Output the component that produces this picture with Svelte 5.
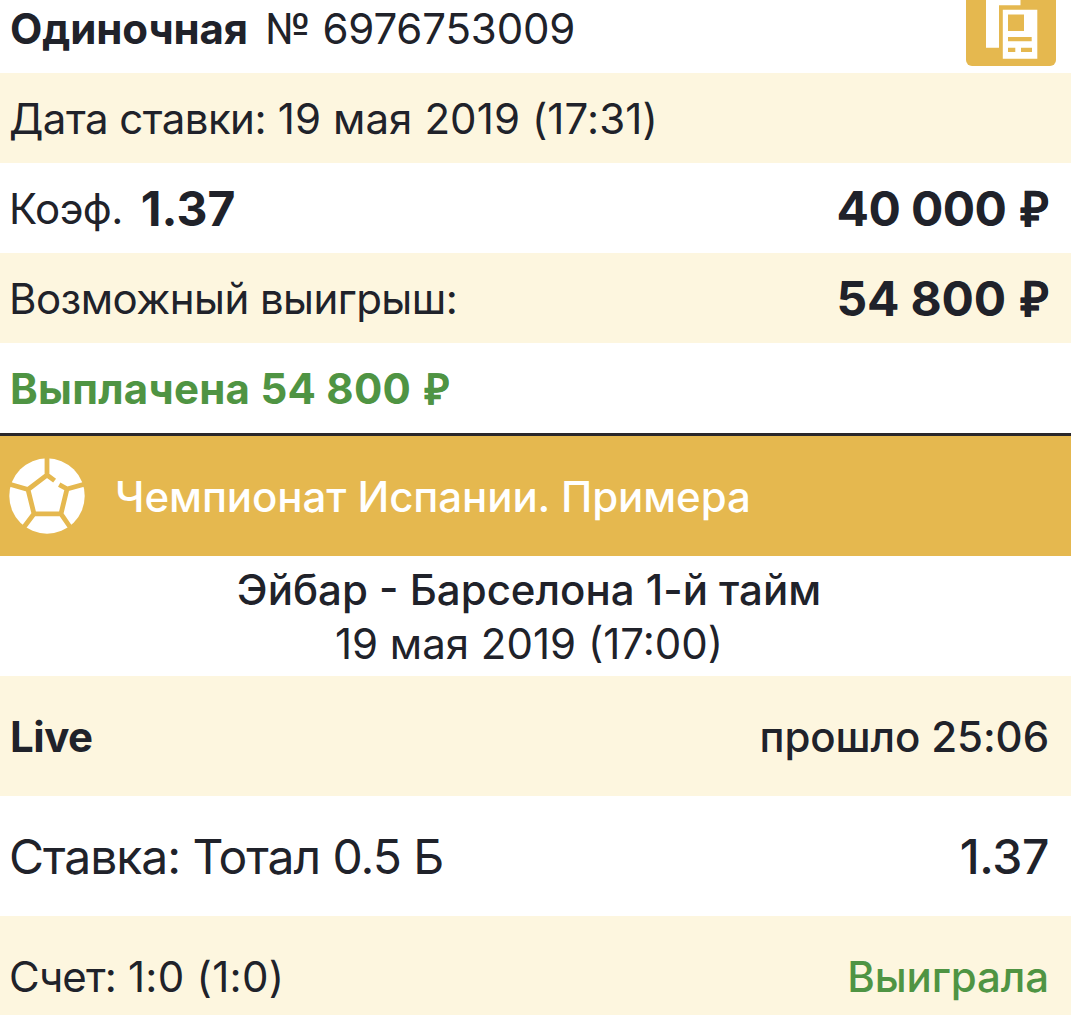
<script>
  const bet = {
    type: 'Одиночная',
    number: '№ 6976753009',
    placed: '19 мая 2019 (17:31)',
    odds: '1.37',
    stake: '40 000',
    win: '54 800',
  };
</script>

<main class="slip">
  <header class="row head">
    <div class="pair"><strong class="type">{bet.type}</strong><span class="number">{bet.number}</span></div>
    <button class="copy" aria-label="Копировать">
      <svg width="90" height="66" viewBox="0 0 90 66">
        <path fill="#fff" d="M20 0H54.5V5.3H33V47.7H20Z" />
        <path fill="#fff" fill-rule="evenodd" d="M36.8 9.7H71.3V58.7H36.8ZM42 14.4V31H58V14.4ZM42 37V41.3H65.7V37ZM42 47.7V52H49.3V47.7ZM55 47.7V52H66V47.7Z" />
      </svg>
    </button>
  </header>

  <div class="row tint">
    <span><span class="tight">Дата ставки:</span> <span class="placed">{bet.placed}</span></span>
  </div>
  <div class="row">
    <div class="pair"><span class="tight">Коэф.</span><strong class="big odds">{bet.odds}</strong></div>
    <strong class="big">{bet.stake} <span class="rub">₽</span></strong>
  </div>
  <div class="row tint">
    <span class="tight">Возможный выигрыш:</span>
    <strong class="big win">{bet.win} <span class="rub">₽</span></strong>
  </div>
  <div class="row"><strong class="paid">Выплачена {bet.win} <span class="rub">₽</span></strong></div>

  <section class="league">
    <svg class="ball" width="76" height="76" viewBox="0 0 76 76">
      <circle cx="38" cy="38" r="37.7" fill="#fff" />
      <path
        fill="none"
        stroke="#e5b84f"
        stroke-width="4.8"
        d="M38 0V17M45.6 22.7L38 17L19 31.5L25 55.8H52L58 31L50.2 26.7M19 31.5L0 26M25 55.8L15 69M52 55.8L61 69M58 31L76 26"
      />
    </svg>
    <span class="league-name">Чемпионат Испании. Примера</span>
  </section>

  <section class="match">
    <div class="teams">Эйбар - Барселона 1-й тайм</div>
    <div class="kickoff">19 мая 2019 (17:00)</div>
  </section>

  <div class="row tall tint"><strong class="live">Live</strong><span class="elapsed">прошло 25:06</span></div>
  <div class="row tall"><span class="pick">Ставка: Тотал 0.5 Б</span><span class="pick-odds">{bet.odds}</span></div>
  <div class="row tall tint">
    <span><span class="label">Счет:</span> <span class="score">1:0 (1:0)</span></span>
    <span class="won">Выиграла</span>
  </div>
</main>

<style>
  :global(body) {
    background: #fff;
    overflow: hidden;
  }
  .slip {
    width: 1071px;
    height: 1015px;
    overflow: hidden;
    font-family: Inter, 'Noto Sans', sans-serif;
    font-size: 42px;
    line-height: 54px;
    color: #20222a;
    white-space: nowrap;
  }
  .row {
    box-sizing: border-box;
    height: 90px;
    padding: 2px 22px 0 9px;
    display: flex;
    align-items: center;
    justify-content: space-between;
  }
  .tint { background: #fdf6df; }
  .tall { height: 120px; padding-top: 1px; }
  .head { height: 73px; padding: 0 15px 15px 9px; }
  .pair { display: flex; align-items: center; }
  .copy {
    align-self: flex-start;
    width: 90px;
    height: 66px;
    flex: none;
    padding: 0;
    border: 0;
    border-radius: 0 0 6px 6px;
    background: #e5b84f;
  }
  .copy svg { display: block; }
  strong { font-weight: 650; }
  .type { margin-left: 1px; letter-spacing: -0.1px; }
  .number { margin-left: 17px; letter-spacing: -0.15px; }
  .placed { letter-spacing: 0.1px; }
  .tight { letter-spacing: -0.55px; }
  .big { font-size: 48px; letter-spacing: -0.6px; }
  .win { letter-spacing: -0.2px; }
  .odds { margin-left: 18px; letter-spacing: 0; }
  .rub { margin-left: 4px; font-family: 'Liberation Sans', sans-serif; font-size: 1em; font-weight: 700; line-height: 1; letter-spacing: 0; -webkit-text-stroke: 0.4px; }
  .paid { color: #4f9443; margin-left: 1px; letter-spacing: 0.25px; }
  .live { margin-left: 1px; letter-spacing: -0.5px; }
  .league {
    box-sizing: border-box;
    height: 123px;
    border-top: 3px solid #29272a;
    padding-left: 9px;
    display: flex;
    align-items: center;
    gap: 30px;
    background: #e5b84f;
    color: #fff;
  }
  .ball { flex: none; }
  .league-name { font-weight: 500; padding-top: 1px; letter-spacing: -0.08px; }
  .match {
    box-sizing: border-box;
    height: 120px;
    padding: 7px 22px 0 9px;
    text-align: center;
  }
  .teams { font-weight: 500; }
  .elapsed { font-weight: 500; letter-spacing: -0.1px; }
  .pick { font-size: 48px; letter-spacing: -1.05px; }
  .pick-odds { font-size: 48px; font-weight: 500; letter-spacing: -0.4px; }
  .label { letter-spacing: -0.8px; }
  .score { letter-spacing: 0.3px; }
  .won { font-weight: 500; color: #4f9443; letter-spacing: -0.1px; }
</style>
